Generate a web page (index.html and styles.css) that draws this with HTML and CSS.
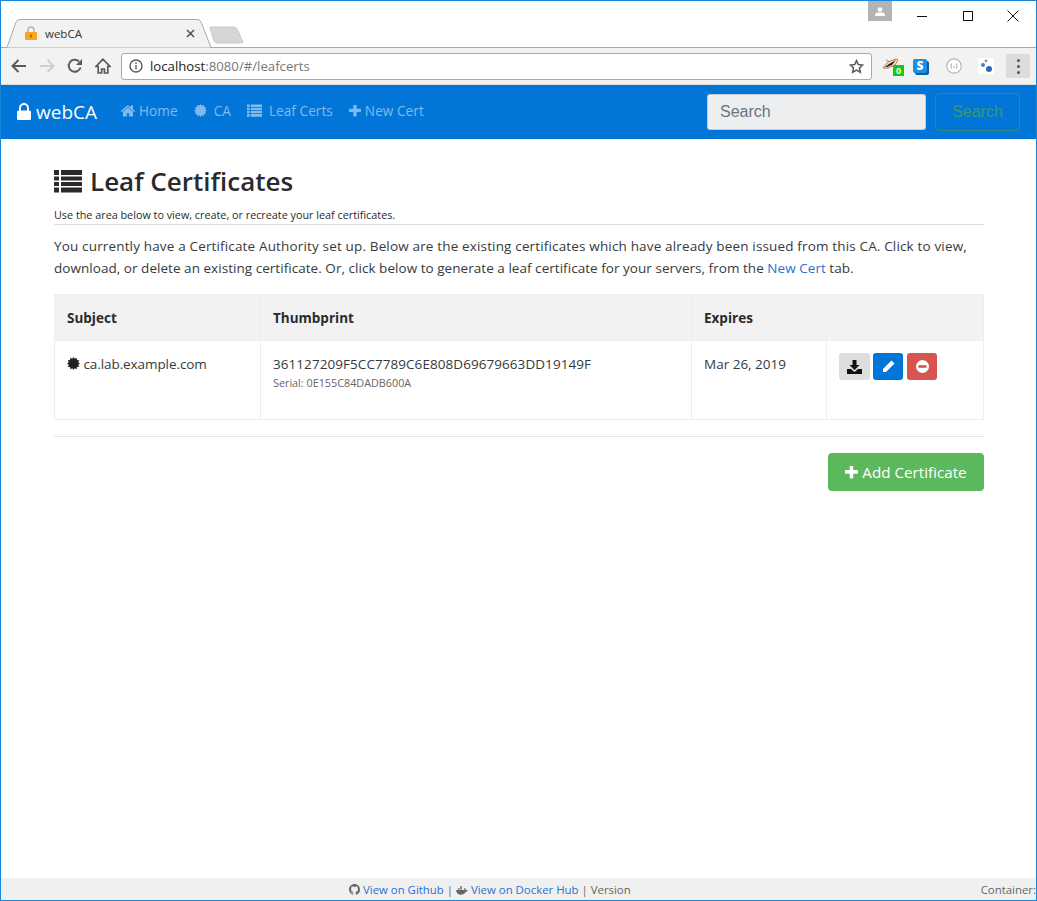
FILE: index.html
```html
<!DOCTYPE html>
<html lang="en">
<head>
  <meta charset="UTF-8">
  <title>webCA</title>
  <link rel="stylesheet" href="styles.css">
</head>
<body>
  <svg class="defs" width="0" height="0">
    <symbol id="i-cert" viewBox="0 0 16 16"><polygon points="16,8 13.80,9.55 14.93,12 12.24,12.24 12,14.93 9.55,13.80 8,16 6.45,13.80 4,14.93 3.76,12.24 1.07,12 2.20,9.55 0,8 2.20,6.45 1.07,4 3.76,3.76 4,1.07 6.45,2.20 8,0 9.55,2.20 12,1.07 12.24,3.76 14.93,4 13.80,6.45"/></symbol>
    <symbol id="i-list" viewBox="0 0 28 24"><path d="M0 1h5v5H0zM7 1h21v5H7zM0 7.500h5v4H0zM7 7.500h21v4H7zM0 13h5v4H0zM7 13h21v4H7zM0 18.500h5v5H0zM7 18.500h21v5H7z"/></symbol>
    <symbol id="i-plus" viewBox="200 200 1400 1400"><path d="M1600 736v192q0 40-28 68t-68 28h-416v416q0 40-28 68t-68 28h-192q-40 0-68-28t-28-68v-416h-416q-40 0-68-28t-28-68v-192q0-40 28-68t68-28h416v-416q0-40 28-68t68-28h192q40 0 68 28t28 68v416h416q40 0 68 28t28 68z"/></symbol>
  </svg>

  <div class="window">
    <div class="tabstrip">
      <div class="tab">
        <svg class="tab-shape" width="206" height="29" viewBox="0 0 206 29"><path d="M0 28.500 L9 3 Q10 .5 13 .5 L190 .5 Q193 .5 194 3 L204 28.500" fill="#f2f2f2" stroke="#a9a9a9"/></svg>
        <svg class="tab-lock" width="12" height="14" viewBox="0 0 12 14"><path d="M3 6V4a3 3 0 0 1 6 0v2" fill="none" stroke="#b5b5b5" stroke-width="1.600"/><rect y="6" width="12" height="8" rx="1" fill="#f5a623"/><rect x="5" y="8.500" width="2" height="3" fill="#b36b00"/></svg>
        <span class="tab-title">webCA</span>
        <svg class="tab-close" width="9" height="9" viewBox="0 0 9 9"><path d="M1 1l7 7M8 1L1 8" stroke="#555" stroke-width="1.600"/></svg>
      </div>
      <svg class="newtab" width="35" height="18" viewBox="0 0 35 18"><path d="M1 1h24q2 0 3 2l6 13q0 1-2 1H8q-2 0-3-2L1 2z" fill="#d6d6d6" stroke="#c8c8c8"/></svg>
      <div class="profile">
        <svg width="10" height="9" viewBox="0 0 10 9"><circle cx="5" cy="2.500" r="2.300" fill="#fff"/><path d="M0 9V7.500Q0 6 3 5.500h4Q10 6 10 7.500V9z" fill="#fff"/></svg>
      </div>
      <div class="winctl">
        <svg width="12" height="12" viewBox="0 0 12 12"><path d="M1 6.500h10" stroke="#111"/></svg>
        <svg width="12" height="12" viewBox="0 0 12 12"><rect x="1.500" y="1.500" width="9" height="9" fill="none" stroke="#111"/></svg>
        <svg width="12" height="12" viewBox="0 0 12 12"><path d="M.5.500l11 11M11.500.500l-11 11" stroke="#111"/></svg>
      </div>
    </div>

    <div class="toolbar">
      <svg class="tb-icon" width="16" height="14" viewBox="0 0 16 14"><path d="M15 7H2M7.500 1L1.500 7l6 6" fill="none" stroke="#5a5a5a" stroke-width="2"/></svg>
      <svg class="tb-icon" width="16" height="14" viewBox="0 0 16 14"><path d="M1 7h13M8.500 1l6 6-6 6" fill="none" stroke="#cfcfcf" stroke-width="2"/></svg>
      <svg class="tb-icon" width="16" height="16" viewBox="0 0 16 16"><path d="M13.500 9.500A6 6 0 1 1 12 3.500" fill="none" stroke="#5a5a5a" stroke-width="2"/><path d="M15 1v6H9z" fill="#5a5a5a"/></svg>
      <svg class="tb-icon tb-home" width="16" height="16" viewBox="0 0 16 16"><path d="M8 1.200L1 8.500h2.200V15h3.400v-4h2.800v4h3.400V8.500H15z" fill="none" stroke="#5a5a5a" stroke-width="1.700"/></svg>
      <div class="omnibox">
        <svg class="omni-info" width="14" height="14" viewBox="0 0 14 14"><circle cx="7" cy="7" r="6" fill="none" stroke="#5a5a5a" stroke-width="1.400"/><path d="M6.300 6h1.400v4.500H6.300zM6.300 3.500h1.400v1.400H6.300z" fill="#5a5a5a"/></svg>
        <span class="omni-host">localhost</span><span class="omni-path">:8080/#/leafcerts</span>
        <svg class="omni-star" width="15" height="15" viewBox="0 0 24 24"><path d="M12 2.500l2.900 6.300 6.900.8-5.100 4.700 1.400 6.800L12 17.600l-6.100 3.500 1.400-6.800L2.200 9.600l6.900-.8z" fill="none" stroke="#5a5a5a" stroke-width="2.400"/></svg>
      </div>
      <div class="exts">
        <div class="ext ext-plane">
          <svg width="17" height="14" viewBox="0 0 17 14"><path d="M1 11L6 5l8-3 2 1-3 5-7 3z" fill="#f5e6da" stroke="#c8763a"/><path d="M3 10l4-3 7-4-4 5-5 2z" fill="#222"/><path d="M4 3l4 2" stroke="#c8763a"/></svg>
          <span class="ext-badge">0</span>
        </div>
        <div class="ext-s"><span>S</span></div>
        <svg class="ext-ring" width="16" height="16" viewBox="0 0 16 16"><circle cx="8" cy="8" r="7.200" fill="#fff" stroke="#b5b5b5" stroke-width="1.200"/><path d="M5.500 5.500Q4.500 8 5.500 10.500M10.500 5.500Q11.500 8 10.500 10.500M7 9h2" fill="none" stroke="#aaa"/></svg>
        <svg class="ext-dots" width="16" height="16" viewBox="0 0 16 16"><rect width="16" height="16" fill="#fff"/><circle cx="5" cy="7" r="2" fill="#4b7fc0"/><circle cx="11" cy="11" r="3" fill="#2f69b5"/><circle cx="8" cy="3" r="1.400" fill="#6e98cc"/></svg>
        <div class="menu-btn"><i></i><i></i><i></i></div>
      </div>
    </div>

    <nav class="navbar">
      <a class="brand">
        <svg class="brand-lock" width="14" height="17" viewBox="0 0 14 17"><path d="M3 8V5a4 4 0 0 1 8 0v3" fill="none" stroke="#fff" stroke-width="2"/><rect y="7.500" width="14" height="9.500" rx="1.500" fill="#fff"/></svg>
        webCA
      </a>
      <ul class="nav-links">
        <li>
          <svg width="14" height="12" viewBox="100 250 1600 1300"><path d="M1472 992v480q0 26-19 45t-45 19h-384v-384h-256v384h-384q-26 0-45-19t-19-45v-480q0-1 .5-3t.5-3l575-474 575 474q1 2 1 6zm223-69l-62 74q-8 9-21 11h-3q-13 0-21-7l-692-577-692 577q-12 8-24 7-13-2-21-11l-62-74q-8-10-7-23.5t11-21.5l719-599q32-26 76-26t76 26l244 204v-195q0-14 9-23t23-9h192q14 0 23 9t9 23v408l219 182q10 8 11 21.5t-7 23.500z"/></svg>
          Home
        </li>
        <li class="gap-wide"><svg width="13" height="13"><use href="#i-cert"/></svg> CA</li>
        <li class="gap-wide"><svg width="15" height="13"><use href="#i-list"/></svg> Leaf Certs</li>
        <li><svg width="12" height="12"><use href="#i-plus"/></svg> New Cert</li>
      </ul>
      <form class="search">
        <input class="search-input" placeholder="Search">
        <button class="search-btn" type="button">Search</button>
      </form>
    </nav>

    <main class="content">
      <h1 class="page-title"><svg width="28" height="24"><use href="#i-list"/></svg> Leaf Certificates</h1>
      <div class="page-sub">Use the area below to view, create, or recreate your leaf certificates.</div>
      <p class="intro">You currently have a Certificate Authority set up. Below are the existing certificates which have already been issued from this CA. Click to view, download, or delete an existing certificate. Or, click below to generate a leaf certificate for your servers, from the <a>New Cert</a> tab.</p>

      <table class="certs">
        <colgroup><col class="c1"><col class="c2"><col class="c3"><col class="c4"></colgroup>
        <thead>
          <tr><th>Subject</th><th>Thumbprint</th><th>Expires</th><th></th></tr>
        </thead>
        <tbody>
          <tr>
            <td class="subject"><svg class="cert-icon" width="13" height="13"><use href="#i-cert"/></svg> ca.lab.example.com</td>
            <td><span class="thumb">361127209F5CC7789C6E808D69679663DD19149F</span><div class="serial">Serial: 0E155C84DADB600A</div></td>
            <td>Mar 26, 2019</td>
            <td>
              <div class="actions">
                <button class="act act-dl" type="button"><svg width="15" height="14" viewBox="0 0 15 14"><path d="M5.500 0h4v5h3L7.500 10l-5-5h3z" fill="#111"/><path d="M0 9h4l3.500 3L11 9h4v5H0z" fill="#111"/></svg></button>
                <button class="act act-edit" type="button"><svg width="13" height="13" viewBox="0 0 13 13"><path d="M9.500.5l3 3L4 12H1v-3z" fill="#fff"/></svg></button>
                <button class="act act-del" type="button"><svg width="13" height="13" viewBox="0 0 13 13"><circle cx="6.500" cy="6.500" r="6.500" fill="#fff"/><rect x="2.500" y="5.200" width="8" height="2.600" fill="#d9534f"/></svg></button>
              </div>
            </td>
          </tr>
        </tbody>
      </table>

      <hr class="rule">
      <div class="add-row">
        <button class="add-btn" type="button"><svg width="13" height="13"><use href="#i-plus"/></svg> Add Certificate</button>
      </div>
    </main>

    <footer class="footer">
      <div class="footer-links">
        <svg width="11" height="11" viewBox="0 0 16 16"><path d="M8 0C3.580 0 0 3.580 0 8c0 3.540 2.290 6.530 5.470 7.590.4.070.55-.17.55-.38 0-.19-.01-.82-.01-1.490-2.010.37-2.530-.49-2.690-.94-.09-.23-.48-.94-.82-1.130-.28-.15-.68-.52-.01-.53.63-.01 1.080.58 1.230.82.72 1.210 1.870.87 2.330.66.070-.52.28-.87.51-1.070-1.780-.2-3.640-.89-3.640-3.950 0-.87.31-1.590.82-2.150-.08-.2-.36-1.020.08-2.120 0 0 .67-.21 2.200.82.64-.18 1.320-.27 2-.27.68 0 1.360.09 2 .27 1.530-1.040 2.200-.82 2.200-.82.44 1.100.16 1.920.08 2.120.51.56.82 1.270.82 2.150 0 3.070-1.870 3.750-3.650 3.950.29.25.54.73.54 1.480 0 1.070-.01 1.930-.01 2.200 0 .21.15.46.55.38A8.013 8.013 0 0 0 16 8c0-4.420-3.580-8-8-8z"/></svg>
        <a>View on Github</a> | <svg width="12" height="9" viewBox="0 0 13 9"><path d="M0 4h9V2h1.500v2.300Q12 3.800 13 4.500 12 6 10.500 6 9 9 4.500 9 1 9 0 4zM2 2h2v1.500H2zM4.500 2h2v1.500h-2zM4.500 0h2v1.500h-2z"/></svg>
        <a>View on Docker Hub</a> | Version
      </div>
      <div class="footer-right">Container:</div>
    </footer>
  </div>
</body>
</html>
```

FILE: styles.css
```css
* {
  margin: 0;
  padding: 0;
  box-sizing: border-box;
}
html, body {
  width: 100%;
  height: 100%;
}
body {
  font-family: "Open Sans", "Noto Sans", sans-serif;
  font-size: 13.5px;
  color: #373a3c;
  background: #fff;
  overflow: hidden;
}
a {
  color: #0275d8;
}
svg {
  fill: currentColor;
}
.defs {
  position: absolute;
}
.window {
  display: flex;
  flex-direction: column;
  height: 901px;
  border: 1px solid #1a85d9;
}

/* browser chrome */
.tabstrip {
  display: flex;
  align-items: flex-start;
  height: 46px;
  padding-left: 6px;
  background: #fff;
}
.tab {
  position: relative;
  display: flex;
  align-items: center;
  width: 204px;
  height: 28px;
  margin-top: 18px;
}
.tab-shape {
  position: absolute;
  left: 0;
  top: 0;
}
.tab-lock {
  position: relative;
  margin-left: 18px;
}
.tab-title {
  position: relative;
  margin-left: 8px;
  font-size: 11.500px;
  color: #333;
}
.tab-close {
  position: relative;
  margin-left: auto;
  margin-right: 16px;
}
.newtab {
  margin-top: 25px;
  margin-left: -2px;
}
.profile {
  display: flex;
  align-items: center;
  justify-content: center;
  width: 24px;
  height: 20px;
  margin-left: 624px;
  background: #b3b3b3;
}
.winctl {
  display: flex;
  gap: 33.500px;
  margin-left: 24px;
  margin-top: 9px;
}
.toolbar {
  display: flex;
  align-items: center;
  height: 38px;
  padding-left: 10px;
  background: #f2f2f2;
  border-top: 1px solid #a9a9a9;
  border-bottom: 1px solid #ddd;
}
.tb-icon {
  margin-right: 12px;
}
.tb-home {
  margin-right: 10px;
}
.omnibox {
  display: flex;
  align-items: center;
  width: 751px;
  height: 27px;
  padding: 0 7px;
  background: #fff;
  border: 1px solid #a9a9a9;
  border-radius: 3px;
  font-size: 13.200px;
}
.omni-info {
  margin-right: 7px;
}
.omni-host {
  color: #222;
}
.omni-path {
  color: #777;
}
.omni-star {
  margin-left: auto;
}
.exts {
  display: flex;
  align-items: center;
  margin-left: 10px;
}
.ext {
  position: relative;
  width: 22px;
  height: 22px;
  padding-top: 2px;
}
.ext-badge {
  position: absolute;
  left: 11px;
  top: 10px;
  width: 11px;
  height: 11px;
  background: #14c90e;
  color: #fff;
  font-size: 9px;
  font-weight: 700;
  line-height: 11px;
  text-align: center;
}
.ext-s {
  width: 14px;
  height: 14px;
  margin-left: 9px;
  margin-right: 2px;
  background: #1a8fe8;
  border-radius: 2px;
  box-shadow: 2px 2px 0 #0d5ea8;
  color: #fff;
  font-size: 12px;
  font-weight: 800;
  line-height: 14px;
  text-align: center;
}
.ext-ring {
  margin-left: 17px;
}
.ext-dots {
  margin-left: 16px;
}
.menu-btn {
  display: flex;
  flex-direction: column;
  align-items: center;
  justify-content: center;
  gap: 3px;
  width: 24px;
  height: 24px;
  margin-left: 12px;
  background: #dcdcdc;
  border-radius: 2px;
}
.menu-btn i {
  width: 3px;
  height: 3px;
  background: #555;
  border-radius: 50%;
}

/* app navbar */
.navbar {
  display: flex;
  align-items: center;
  height: 54px;
  padding: 0 16px;
  background: #0275d8;
}
.brand {
  display: flex;
  align-items: center;
  gap: 5px;
  color: #fff;
  font-size: 19px;
}
.brand-lock {
  margin-top: -2px;
}
.nav-links {
  display: flex;
  list-style: none;
  margin-left: 24px;
  padding-bottom: 3px;
  gap: 16px;
  color: rgba(255, 255, 255, .5);
  font-size: 13.600px;
  letter-spacing: .05px;
}
.nav-links li {
  display: flex;
  align-items: center;
  gap: 4px;
}
.nav-links .gap-wide {
  gap: 7px;
}
.search {
  display: flex;
  align-items: center;
  gap: 9px;
  margin-left: auto;
}
.search-input {
  width: 219px;
  height: 36px;
  padding: 0 12px;
  border: 1px solid rgba(0, 0, 0, .15);
  border-radius: 3px;
  background: #eceeef;
  font: 16px "Liberation Sans", sans-serif;
}
.search-input::placeholder {
  color: #6b747b;
}
.search-btn {
  width: 85px;
  height: 38px;
  background: transparent;
  border: 1px solid #2f8f7a;
  border-radius: 4px;
  color: #3a9a6c;
  font: 16px "Liberation Sans", sans-serif;
}

/* page */
.content {
  flex: 1;
  padding: 23px 52px 0 53px;
}
.page-title {
  display: flex;
  align-items: center;
  gap: 8px;
  height: 37px;
  font-size: 26px;
  font-weight: 600;
  color: #292b2c;
}
.page-sub {
  margin-top: 8px;
  padding-bottom: 2px;
  border-bottom: 1px solid #ddd;
  font-size: 10.800px;
  line-height: 15px;
  color: #292b2c;
}
.intro {
  margin-top: 10px;
  line-height: 22px;
  letter-spacing: .04px;
}
.intro::first-line {
  letter-spacing: .156px;
}
.intro a {
  color: #2a6fd0;
}
.certs {
  width: 929px;
  margin-top: 15px;
  border-collapse: collapse;
  table-layout: fixed;
}
.c1 { width: 206px; }
.c2 { width: 431px; }
.c3 { width: 135px; }
.c4 { width: 157px; }
.certs th, .certs td {
  border: 1px solid #eceeef;
  padding: 14px 12px 12px;
  text-align: left;
  vertical-align: top;
}
.certs th {
  height: 46px;
  background: #f2f2f2;
  font-weight: 700;
  color: #292b2c;
}
.certs td {
  height: 79px;
}
.subject {
  letter-spacing: -.08px;
}
.thumb {
  letter-spacing: .06px;
}
.cert-icon {
  vertical-align: -1px;
  color: #222;
}
.serial {
  margin-top: 2px;
  font-size: 10.800px;
  color: #666;
}
.actions {
  display: flex;
  gap: 3px;
  margin-top: -2px;
}
.act {
  display: flex;
  align-items: center;
  justify-content: center;
  width: 31px;
  height: 27px;
  border: 0;
  border-radius: 3px;
}
.act-dl { background: #ddd; }
.act-edit { width: 30px; background: #0275d8; }
.act-del { width: 30px; margin-left: 1px; background: #d9534f; }
.rule {
  margin-top: 16px;
  border: 0;
  border-top: 1px solid #e5e5e5;
}
.add-row {
  display: flex;
  justify-content: flex-end;
  margin-top: 16px;
}
.add-btn {
  display: flex;
  align-items: center;
  gap: 4px;
  width: 156px;
  height: 38px;
  justify-content: center;
  background: #5cb85c;
  border: 0;
  border-radius: 4px;
  color: #fff;
  font: 15.200px "Open Sans", sans-serif;
}
.footer {
  display: flex;
  height: 22px;
  align-items: center;
  background: #f0f0f0;
  color: #666;
  font-size: 11.400px;
}
.footer-links {
  margin-left: 348px;
}
.footer-links svg {
  vertical-align: -1px;
}
.footer-links a {
  color: #2a6fd0;
}
.footer-right {
  margin-left: auto;
  white-space: nowrap;
}
```
